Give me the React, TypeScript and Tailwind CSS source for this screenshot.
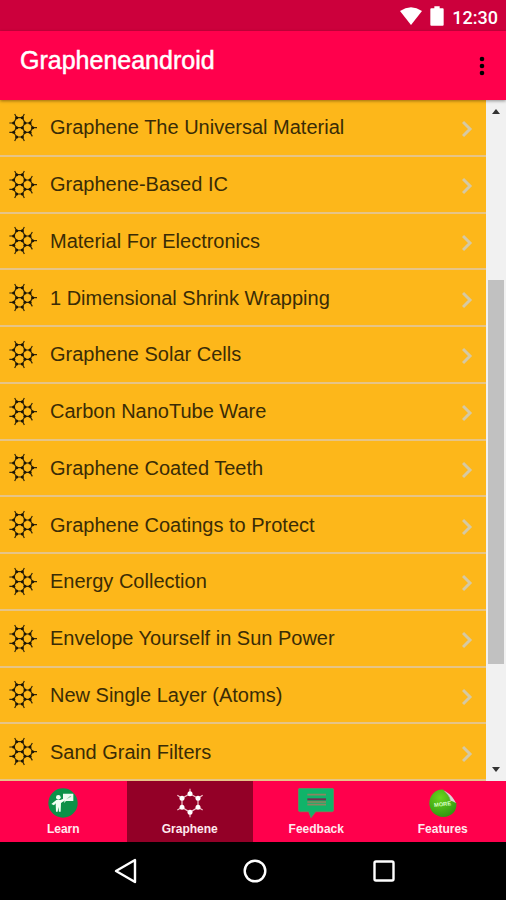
import type { ReactNode } from "react";

const topics = [
  "Graphene The Universal Material",
  "Graphene-Based IC",
  "Material For Electronics",
  "1 Dimensional Shrink Wrapping",
  "Graphene Solar Cells",
  "Carbon NanoTube Ware",
  "Graphene Coated Teeth",
  "Graphene Coatings to Protect",
  "Energy Collection",
  "Envelope Yourself in Sun Power",
  "New Single Layer (Atoms)",
  "Sand Grain Filters",
];

const latticeAtoms = [
  [50, 50], [67, 50], [41, 66], [75, 66], [50, 80], [67, 80],
  [75, 94], [67, 108], [50, 108], [41, 94], [90, 66], [98, 80], [90, 94],
];

const ringAtoms = [[38, 15], [62, 29], [62, 56], [38, 71], [14, 56], [14, 29]];

/* Three fused carbon rings with open bonds around the edge */
function LatticeIcon() {
  return (
    <svg aria-hidden viewBox="27 36 87 87" className="size-[29px] shrink-0">
      <path
        d="M50 50H67L75 66L67 80H50L41 66ZM50 80L41 94L50 108H67L75 94L67 80M75 66H90L98 80L90 94H75M50 50L44 39M67 50L73 39M41 66H28M41 94H28M50 108L44 120M67 108L73 120M98 80H111M90 66L97 54M90 94L97 106"
        fill="none"
        stroke="#33270a"
        strokeWidth="3.6"
      />
      {latticeAtoms.map(([x, y]) => (
        <circle key={`${x}-${y}`} cx={x} cy={y} r="4.6" fill="#1c1505" />
      ))}
    </svg>
  );
}

function LearnIcon() {
  return (
    <svg aria-hidden viewBox="0 0 90 90" className="size-[30px]">
      <circle cx="45" cy="45" r="44" fill="#0c9148" />
      <path d="M45 17H76V39H54L48 45L50 36H45Z" fill="#eefaf0" />
      <path d="M55 34L67 23L70 26Z" fill="#85c99c" />
      <circle cx="31" cy="28" r="7" fill="#f2fff4" />
      <path
        d="M25 36H37L52 30L54 35L39 45L38 71H33L31 57L29 71H24L23 46L18 52L10 48Z"
        fill="#f2fff4"
      />
    </svg>
  );
}

function RingIcon() {
  return (
    <svg aria-hidden viewBox="-7 -2 90 90" className="size-[30px]">
      <path
        d="M38 15L62 29V56L38 71L14 56V29ZM38 15V0M62 29L76 20M62 56L76 64M38 71V86M14 56L0 64M14 29L0 20"
        fill="none"
        stroke="#f3c3cc"
        strokeWidth="3.6"
      />
      {ringAtoms.map(([x, y]) => (
        <circle key={`${x}-${y}`} cx={x} cy={y} r="7.5" fill="#fff" />
      ))}
    </svg>
  );
}

function FeedbackIcon() {
  return (
    <svg aria-hidden viewBox="0 0 108 90" className="h-[30px] w-9">
      <path
        d="M6 1H102Q107 1 107 6V65Q107 71 101 71H53L39 89L32 71H7Q1 71 1 65V6Q1 1 6 1Z"
        fill="#10b469"
        stroke="#5f8f5c"
        strokeWidth="3"
      />
      <path d="M28 20H84M28 50H84" stroke="#8c8461" strokeWidth="5" />
      <path d="M28 34H84" stroke="#70304f" strokeWidth="6" />
      <path d="M28 42H84" stroke="#a7795e" strokeWidth="4" />
    </svg>
  );
}

function FeaturesIcon() {
  return (
    <svg aria-hidden viewBox="0 0 90 90" className="size-[30px]">
      <defs>
        <radialGradient id="sticker" cx="40%" cy="30%" r="70%">
          <stop offset="0" stopColor="#6bd51c" />
          <stop offset="1" stopColor="#329a12" />
        </radialGradient>
      </defs>
      <path d="M46 5C23 3 4 22 4 46C4 69 22 87 46 87C70 87 88 69 85 46Z" fill="url(#sticker)" />
      <path d="M48 8C62 14 77 28 84 46C78 41 72 39 67 38C66 27 57 17 48 8Z" fill="#dcd8d6" />
      <path d="M48 8C57 17 66 27 67 38" fill="none" stroke="#8aa36f" strokeWidth="2" />
      <text
        x="18"
        y="54"
        fontSize="17"
        fontWeight="700"
        fill="#d9ffc5"
        transform="rotate(-6 44 48)"
        fontFamily="Liberation Sans, sans-serif"
      >
        MORE
      </text>
    </svg>
  );
}

const tabs: { label: string; icon: ReactNode; active?: boolean }[] = [
  { label: "Learn", icon: <LearnIcon /> },
  { label: "Graphene", icon: <RingIcon />, active: true },
  { label: "Feedback", icon: <FeedbackIcon /> },
  { label: "Features", icon: <FeaturesIcon /> },
];

function StatusBar() {
  return (
    <div className="flex h-[31px] items-center justify-end bg-[#cc003c] pr-2 text-white">
      <svg aria-hidden viewBox="0 0 66 54" className="mr-2 h-[18px] w-[22px]">
        <path d="M0 12Q33 -10 66 12L33 54Z" fill="currentColor" />
      </svg>
      <svg aria-hidden viewBox="0 0 42 60" className="mr-2 h-5 w-3.5">
        <path
          d="M13 1H29V7H38Q41 7 41 10V56Q41 59 38 59H4Q1 59 1 56V10Q1 7 4 7H13Z"
          fill="currentColor"
        />
      </svg>
      <span className="pt-1 font-[Roboto] text-[18px] leading-5 font-medium">12:30</span>
    </div>
  );
}

function ScrollTrack() {
  return (
    <div aria-hidden className="flex w-5 flex-col items-center bg-[#f1f1f1] py-[9px]">
      <svg viewBox="0 0 8 5" className="h-[5px] w-2">
        <path d="M4 0L8 5H0Z" fill="#333" />
      </svg>
      <div className="flex w-full grow flex-col items-center pt-[166px] pb-[103px]">
        <div className="w-4 grow bg-[#c1c1c1]" />
      </div>
      <svg viewBox="0 0 8 5" className="h-[5px] w-2">
        <path d="M4 5L8 0H0Z" fill="#333" />
      </svg>
    </div>
  );
}

export default function App() {
  return (
    <div className="flex min-h-screen flex-col bg-black font-['Liberation_Sans',Arial,sans-serif]">
      <StatusBar />

      <header className="relative z-10 flex h-[69px] items-center justify-between bg-[#ff004c] px-5 shadow-[0_1px_3px_rgba(0,0,0,0.4)]">
        <h1 className="pb-3 text-[25px] leading-8 text-white [-webkit-text-stroke:0.5px_white]">
          Grapheneandroid
        </h1>
        <button type="button" aria-label="More options" className="-mr-1">
          <svg aria-hidden viewBox="0 0 16 20" className="h-5 w-4">
            <circle cx="8" cy="3" r="2.3" />
            <circle cx="8" cy="10" r="2.3" />
            <circle cx="8" cy="17" r="2.3" />
          </svg>
        </button>
      </header>

      <main className="flex grow">
        <ul className="grid min-w-0 grow auto-rows-fr bg-[#fdb71a]">
          {topics.map((topic) => (
            <li key={topic} className="flex border-b-2 border-[#e6c487]">
              <a href="#" className="flex grow items-center pr-3 pl-[9px] text-[20px] leading-6 text-[#3a2c06]">
                <LatticeIcon />
                <span className="ml-3 grow">{topic}</span>
                <svg aria-hidden viewBox="0 0 12 18" className="mt-1 h-[18px] w-3">
                  <path d="M1 2L8 9L1 16" fill="none" stroke="#d5c9a5" strokeWidth="3" />
                </svg>
              </a>
            </li>
          ))}
        </ul>
        <ScrollTrack />
      </main>

      <nav className="grid h-[61px] grid-cols-4 bg-[#ff004c]">
        {tabs.map((tab) => (
          <a
            key={tab.label}
            href="#"
            aria-current={tab.active ? "page" : undefined}
            className={`flex flex-col items-center pt-[7px] text-[12px] leading-[22px] font-bold text-[#ffe9ee] ${tab.active ? "bg-[#930027]" : ""}`}
          >
            {tab.icon}
            {tab.label}
          </a>
        ))}
      </nav>

      <div className="flex h-[58px] items-center justify-center gap-[105px] pl-[3px] text-white">
        <button type="button" aria-label="Back">
          <svg aria-hidden viewBox="0 0 24 26" className="h-[26px] w-6">
            <path d="M21 2V24L2 13Z" fill="none" stroke="currentColor" strokeWidth="2.4" strokeLinejoin="round" />
          </svg>
        </button>
        <button type="button" aria-label="Home">
          <svg aria-hidden viewBox="0 0 24 24" className="size-6">
            <circle cx="12" cy="12" r="10.3" fill="none" stroke="currentColor" strokeWidth="2.4" />
          </svg>
        </button>
        <button type="button" aria-label="Recent apps">
          <svg aria-hidden viewBox="0 0 24 24" className="size-6">
            <rect x="2.5" y="2.5" width="19" height="19" rx="1.5" fill="none" stroke="currentColor" strokeWidth="2.4" />
          </svg>
        </button>
      </div>
    </div>
  );
}
